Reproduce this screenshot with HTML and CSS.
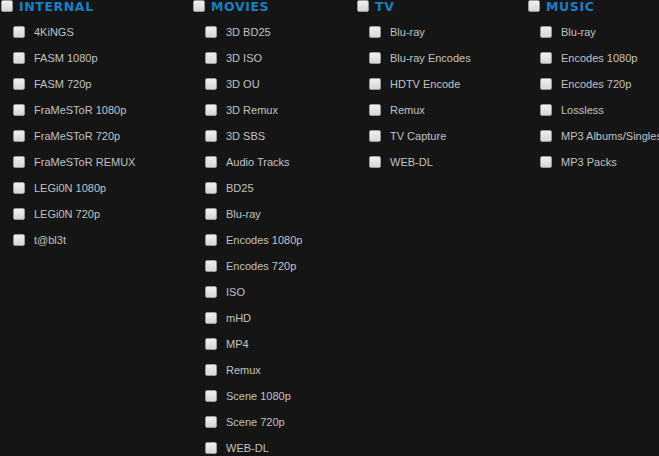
FILE: index.html
```html
<!DOCTYPE html>
<html lang="en">
<head>
  <meta charset="UTF-8">
  <title>Categories</title>
  <link rel="stylesheet" href="styles.css">
</head>
<body>
  <div class="categorias">

    <div class="grupo">
      <label class="cabecalho"><input type="checkbox"> INTERNAL</label>
      <label class="item"><input type="checkbox"> 4KiNGS</label>
      <label class="item"><input type="checkbox"> FASM 1080p</label>
      <label class="item"><input type="checkbox"> FASM 720p</label>
      <label class="item"><input type="checkbox"> FraMeSToR 1080p</label>
      <label class="item"><input type="checkbox"> FraMeSToR 720p</label>
      <label class="item"><input type="checkbox"> FraMeSToR REMUX</label>
      <label class="item"><input type="checkbox"> LEGi0N 1080p</label>
      <label class="item"><input type="checkbox"> LEGi0N 720p</label>
      <label class="item"><input type="checkbox"> t@bl3t</label>
    </div>

    <div class="grupo">
      <label class="cabecalho"><input type="checkbox"> MOVIES</label>
      <label class="item"><input type="checkbox"> 3D BD25</label>
      <label class="item"><input type="checkbox"> 3D ISO</label>
      <label class="item"><input type="checkbox"> 3D OU</label>
      <label class="item"><input type="checkbox"> 3D Remux</label>
      <label class="item"><input type="checkbox"> 3D SBS</label>
      <label class="item"><input type="checkbox"> Audio Tracks</label>
      <label class="item"><input type="checkbox"> BD25</label>
      <label class="item"><input type="checkbox"> Blu-ray</label>
      <label class="item"><input type="checkbox"> Encodes 1080p</label>
      <label class="item"><input type="checkbox"> Encodes 720p</label>
      <label class="item"><input type="checkbox"> ISO</label>
      <label class="item"><input type="checkbox"> mHD</label>
      <label class="item"><input type="checkbox"> MP4</label>
      <label class="item"><input type="checkbox"> Remux</label>
      <label class="item"><input type="checkbox"> Scene 1080p</label>
      <label class="item"><input type="checkbox"> Scene 720p</label>
      <label class="item"><input type="checkbox"> WEB-DL</label>
    </div>

    <div class="grupo">
      <label class="cabecalho"><input type="checkbox"> TV</label>
      <label class="item"><input type="checkbox"> Blu-ray</label>
      <label class="item"><input type="checkbox"> Blu-ray Encodes</label>
      <label class="item"><input type="checkbox"> HDTV Encode</label>
      <label class="item"><input type="checkbox"> Remux</label>
      <label class="item"><input type="checkbox"> TV Capture</label>
      <label class="item"><input type="checkbox"> WEB-DL</label>
    </div>

    <div class="grupo">
      <label class="cabecalho"><input type="checkbox"> MUSIC</label>
      <label class="item"><input type="checkbox"> Blu-ray</label>
      <label class="item"><input type="checkbox"> Encodes 1080p</label>
      <label class="item"><input type="checkbox"> Encodes 720p</label>
      <label class="item"><input type="checkbox"> Lossless</label>
      <label class="item"><input type="checkbox"> MP3 Albums/Singles</label>
      <label class="item"><input type="checkbox"> MP3 Packs</label>
    </div>

  </div>
</body>
</html>
```

FILE: styles.css
```css
* {
  box-sizing: border-box;
}

body {
  margin: 0;
  padding: 0;
  background-color: #151515;
  font-family: 'Liberation Sans', Arial, sans-serif;
  overflow: hidden;
}

.categorias {
  display: grid;
  grid-template-columns: 192px 164px 171px 1fr;
  padding-left: 1px;
  margin-top: -7px;
}

.grupo {
  display: flex;
  flex-direction: column;
}

.cabecalho, .item {
  display: flex;
  align-items: center;
  height: 26px;
  white-space: nowrap;
}

.cabecalho {
  gap: 6px;
  color: #1b7fc6;
  font-family: 'DejaVu Sans', sans-serif;
  font-weight: bold;
  font-size: 12.5px;
  letter-spacing: 0.6px;
}

.item {
  padding-left: 12px;
  gap: 9px;
  color: #c2c2c2;
  font-size: 11px;
}

input[type="checkbox"] {
  appearance: none;
  -webkit-appearance: none;
  margin: 0;
  width: 12px;
  height: 12px;
  flex: none;
  border: 1px solid #9a9a9a;
  border-radius: 2px;
  background: linear-gradient(#f0f0f0, #d6d6d6);
}
```
